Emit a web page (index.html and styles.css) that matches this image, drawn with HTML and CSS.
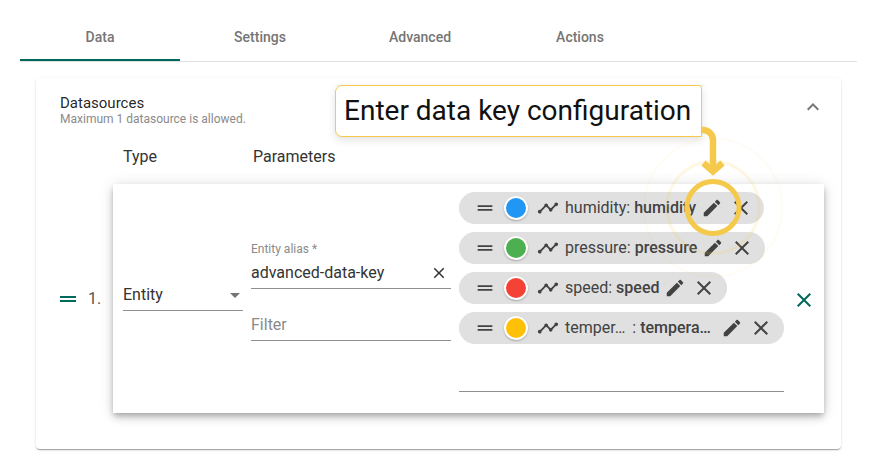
FILE: index.html
```html
<!DOCTYPE html>
<html lang="en">
<head>
    <meta charset="UTF-8">
    <title>Data key configuration</title>
    <link rel="stylesheet" href="styles.css">
</head>
<body>

<svg class="sprite" width="0" height="0">
    <defs>
        <path id="i-drag" d="M20 9H4v2h16V9zM4 15h16v-2H4v2z"/>
        <path id="i-timeline" d="M23 8c0 1.1-.9 2-2 2-.18 0-.35-.02-.51-.07l-3.56 3.55c.05.16.07.34.07.52 0 1.1-.9 2-2 2s-2-.9-2-2c0-.18.02-.36.07-.52l-2.55-2.55c-.16.05-.34.07-.52.07s-.36-.02-.52-.07l-4.55 4.56c.05.16.07.33.07.51 0 1.1-.9 2-2 2s-2-.9-2-2 .9-2 2-2c.18 0 .35.02.51.07l4.56-4.55C8.02 9.36 8 9.18 8 9c0-1.1.9-2 2-2s2 .9 2 2c0 .18-.02.36-.07.52l2.55 2.55c.16-.05.34-.07.52-.07s.36.02.52.07l3.55-3.56C19.02 8.35 19 8.18 19 8c0-1.1.9-2 2-2s2 .9 2 2z"/>
        <path id="i-edit" d="M3 17.25V21h3.75L17.81 9.94l-3.75-3.75L3 17.25zM20.71 7.04c.39-.39.39-1.02 0-1.41l-2.34-2.34c-.39-.39-1.02-.39-1.41 0l-1.83 1.83 3.75 3.75 1.83-1.83z"/>
        <path id="i-close" d="M19 6.41L17.59 5 12 10.59 6.41 5 5 6.41 10.59 12 5 17.59 6.41 19 12 13.41 17.59 19 19 17.59 13.41 12z"/>
        <path id="i-less" d="M12 8l-6 6 1.41 1.41L12 10.83l4.59 4.58L18 14z"/>
    </defs>
</svg>

<div class="tabs">
    <div class="tab active">Data</div>
    <div class="tab">Settings</div>
    <div class="tab">Advanced</div>
    <div class="tab">Actions</div>
</div>

<div class="panel">
    <div class="panel-head">
        <div>
            <div class="panel-title">Datasources</div>
            <div class="panel-sub">Maximum 1 datasource is allowed.</div>
        </div>
        <svg class="chevron" viewBox="0 0 24 24"><use href="#i-less"/></svg>
    </div>

    <div class="columns">
        <span class="col-type">Type</span>
        <span>Parameters</span>
    </div>

    <div class="row">
        <svg class="row-drag" viewBox="0 0 24 24"><use href="#i-drag"/></svg>
        <span class="row-num">1.</span>

        <div class="source">
            <div class="select">
                <span class="select-value">Entity</span>
                <span class="caret"></span>
            </div>

            <div class="params">
                <div class="field">
                    <label class="field-label">Entity alias *</label>
                    <div class="field-value">
                        <span>advanced-data-key</span>
                        <svg class="clear" viewBox="0 0 24 24"><use href="#i-close"/></svg>
                    </div>
                </div>
                <div class="field filter">Filter</div>
            </div>

            <div class="keys">
                <div class="chip">
                    <svg class="ic-drag" viewBox="0 0 24 24"><use href="#i-drag"/></svg>
                    <span class="dot blue"></span>
                    <svg class="ic-line" viewBox="0 0 24 24"><use href="#i-timeline"/></svg>
                    <span class="key">humidity: <b>humidity</b></span>
                    <svg class="ic-edit" viewBox="0 0 24 24"><use href="#i-edit"/></svg>
                    <svg class="ic-close" viewBox="0 0 24 24"><use href="#i-close"/></svg>
                </div>
                <div class="chip">
                    <svg class="ic-drag" viewBox="0 0 24 24"><use href="#i-drag"/></svg>
                    <span class="dot green"></span>
                    <svg class="ic-line" viewBox="0 0 24 24"><use href="#i-timeline"/></svg>
                    <span class="key">pressure: <b>pressure</b></span>
                    <svg class="ic-edit" viewBox="0 0 24 24"><use href="#i-edit"/></svg>
                    <svg class="ic-close" viewBox="0 0 24 24"><use href="#i-close"/></svg>
                </div>
                <div class="chip">
                    <svg class="ic-drag" viewBox="0 0 24 24"><use href="#i-drag"/></svg>
                    <span class="dot red"></span>
                    <svg class="ic-line" viewBox="0 0 24 24"><use href="#i-timeline"/></svg>
                    <span class="key">speed: <b>speed</b></span>
                    <svg class="ic-edit" viewBox="0 0 24 24"><use href="#i-edit"/></svg>
                    <svg class="ic-close" viewBox="0 0 24 24"><use href="#i-close"/></svg>
                </div>
                <div class="chip">
                    <svg class="ic-drag" viewBox="0 0 24 24"><use href="#i-drag"/></svg>
                    <span class="dot amber"></span>
                    <svg class="ic-line" viewBox="0 0 24 24"><use href="#i-timeline"/></svg>
                    <span class="key key-long">temper… <span class="colon">: </span><b>tempera…</b></span>
                    <svg class="ic-edit" viewBox="0 0 24 24"><use href="#i-edit"/></svg>
                    <svg class="ic-close" viewBox="0 0 24 24"><use href="#i-close"/></svg>
                </div>
                <div class="keys-line"></div>
            </div>

            <svg class="remove" viewBox="0 0 24 24"><use href="#i-close"/></svg>
        </div>
    </div>
</div>

<!-- help overlay -->
<div class="tip">Enter data key configuration</div>
<svg class="spot" width="877" height="471" viewBox="0 0 877 471">
    <circle class="ring-far" cx="713" cy="207.500" r="69"/>
    <circle class="ring-near" cx="713" cy="207.500" r="46"/>
    <circle class="ring" cx="713" cy="207.500" r="26"/>
    <path class="arrow" d="M702 130h1a10 10 0 0 1 10 10v31"/>
    <path class="arrow" d="M703.500 163l9.500 8.500 9.500-8.500"/>
</svg>

</body>
</html>
```

FILE: styles.css
```css
* {
    box-sizing: border-box;
}

body {
    margin: 0;
    width: 877px;
    height: 471px;
    overflow: hidden;
    position: relative;
    background: #fff;
    font-family: Roboto, sans-serif;
    color: rgba(0, 0, 0, 0.87);
}

svg {
    display: block;
    flex: none;
    fill: currentColor;
}

.sprite {
    position: absolute;
}

/* tabs */
.tabs {
    display: flex;
    height: 49px;
    margin: 13px 20px 0;
    border-bottom: 1px solid #e0e0e0;
}

.tab {
    width: 160px;
    height: 48px;
    line-height: 48px;
    text-align: center;
    font-size: 14px;
    font-weight: 500;
    color: #757575;
}

.tab.active {
    border-bottom: 2px solid #00695c;
}

/* datasources panel */
.panel {
    height: 371px;
    margin: 16px 36px 0;
    padding: 16px 16px 0 24px;
    border-radius: 4px;
    box-shadow: 0 2px 1px -1px rgba(0, 0, 0, 0.2), 0 1px 1px 0 rgba(0, 0, 0, 0.14), 0 1px 3px 0 rgba(0, 0, 0, 0.12);
}

.panel-head {
    display: flex;
    justify-content: space-between;
    height: 32px;
}

.panel-title {
    font-size: 15px;
    line-height: 18px;
}

.panel-sub {
    font-size: 12px;
    line-height: 14px;
    color: #8a8a8a;
}

.chevron {
    width: 24px;
    height: 24px;
    margin-top: 1px;
    color: #757575;
}

.columns {
    display: flex;
    margin: 21px 0 0 63px;
    height: 20px;
    font-size: 16px;
    line-height: 20px;
    color: #333;
}

.col-type {
    width: 130px;
}

.row {
    display: flex;
    align-items: center;
    margin-top: 17px;
}

.row-drag {
    width: 24px;
    height: 24px;
    margin-left: -4px;
    color: #00695c;
}

.row-num {
    width: 25px;
    margin-left: 8px;
    font-size: 16px;
    color: #555;
}

.source {
    display: flex;
    flex: none;
    width: 711px;
    height: 229px;
    padding: 8px 0 0 10px;
    background: #fff;
    box-shadow: 0 3px 5px -1px rgba(0, 0, 0, 0.2), 0 5px 8px 0 rgba(0, 0, 0, 0.14), 0 1px 14px 0 rgba(0, 0, 0, 0.12);
}

/* type select */
.select {
    display: flex;
    align-items: center;
    justify-content: space-between;
    width: 120px;
    height: 30px;
    margin-top: 89px;
    padding-right: 3px;
    border-bottom: 1px solid #8f8f8f;
    font-size: 16px;
    color: #333;
}

.select-value {
    padding-bottom: 2px;
}

.caret {
    border-left: 5px solid transparent;
    border-right: 5px solid transparent;
    border-top: 5px solid #757575;
}

/* alias and filter fields */
.params {
    width: 200px;
    margin: 49px 8px 0;
}

.field {
    border-bottom: 1px solid #8f8f8f;
}

.field-label {
    display: block;
    height: 16px;
    font-size: 12px;
    line-height: 16px;
    color: #8a8a8a;
}

.field-value {
    display: flex;
    align-items: center;
    justify-content: space-between;
    height: 31px;
    padding: 0 3px 0 0;
    font-size: 16px;
    color: #333;
}

.clear {
    width: 18px;
    height: 18px;
    color: #333;
}

.filter {
    height: 31px;
    margin-top: 21px;
    font-size: 16px;
    line-height: 30px;
    color: #8a8a8a;
}

/* data key chips */
.keys {
    display: flex;
    flex-direction: column;
    align-items: flex-start;
    gap: 8px;
    width: 325px;
}

.chip {
    display: flex;
    align-items: center;
    height: 32px;
    padding: 0 11px 0 15px;
    border-radius: 16px;
    background: #e0e0e0;
    color: #424242;
}

.ic-drag {
    width: 22px;
    height: 22px;
}

.dot {
    width: 24px;
    height: 24px;
    margin-left: 8px;
    border: 2px solid #fff;
    border-radius: 50%;
    box-shadow: 0 1px 2px rgba(0, 0, 0, 0.25);
}

.dot.blue {
    background: #2196f3;
}

.dot.green {
    background: #4caf50;
}

.dot.red {
    background: #f44336;
}

.dot.amber {
    background: #ffc107;
}

.ic-line {
    width: 22px;
    height: 22px;
    margin-left: 9px;
}

.key {
    margin-left: 6px;
    font-size: 16px;
    line-height: 20px;
    white-space: nowrap;
}

.key-long {
    width: 151px;
}

.key b {
    font-weight: 500;
}

.colon {
    margin-left: 3px;
}

.ic-edit {
    width: 22px;
    height: 22px;
    margin-left: 5px;
}

.ic-close {
    width: 24px;
    height: 24px;
    margin-left: 6px;
}

.keys-line {
    width: 100%;
    margin-top: 39px;
    border-bottom: 1px solid #8f8f8f;
}

.remove {
    width: 24px;
    height: 24px;
    margin: 96px 0 0 8px;
    color: #00695c;
}

/* help overlay */
.tip {
    position: absolute;
    left: 335px;
    top: 85px;
    width: 367px;
    height: 52px;
    padding-left: 8px;
    border: 1px solid #f5c94c;
    border-radius: 7px 3px 0 7px;
    background: #fff;
    box-shadow: 0 3px 8px rgba(0, 0, 0, 0.12);
    font-size: 28px;
    line-height: 50px;
    color: #111;
    white-space: nowrap;
}

.spot {
    position: absolute;
    left: 0;
    top: 0;
    fill: none;
}

.ring {
    stroke: #f5c94c;
    stroke-width: 5;
}

.ring-near {
    stroke: #f5c94c;
    stroke-opacity: 0.15;
    stroke-width: 3;
}

.ring-far {
    stroke: #f5c94c;
    stroke-opacity: 0.06;
    stroke-width: 2;
}

.arrow {
    stroke: #f5c94c;
    stroke-width: 6.500;
}
```
